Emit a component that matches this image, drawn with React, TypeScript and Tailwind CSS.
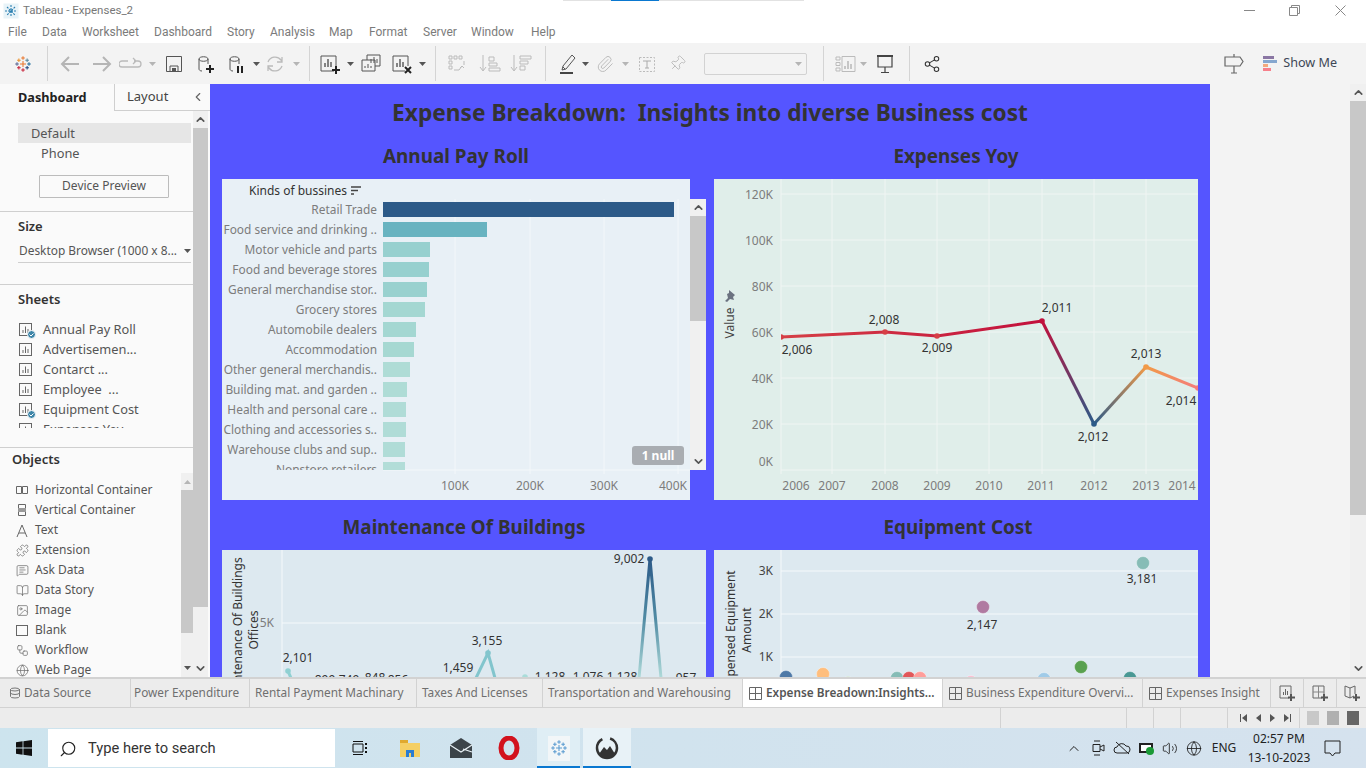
import React from 'react';
import { Search, Volume2, Globe, ChevronUp, ChevronDown, ChevronLeft, Puzzle, MessageSquareText, BookOpen, Image as ImageIcon, Workflow, Share2, Database, Pin, Paperclip } from 'lucide-react';

const menuItems = [
  { label: 'File', w: 'w-[34px]' },
  { label: 'Data', w: 'w-[40px]' },
  { label: 'Worksheet', w: 'w-[72px]' },
  { label: 'Dashboard', w: 'w-[73px]' },
  { label: 'Story', w: 'w-[43px]' },
  { label: 'Analysis', w: 'w-[59px]' },
  { label: 'Map', w: 'w-[40px]' },
  { label: 'Format', w: 'w-[54px]' },
  { label: 'Server', w: 'w-[48px]' },
  { label: 'Window', w: 'w-[60px]' },
  { label: 'Help', w: 'w-[40px]' },
];

const bars = [
  { label: 'Retail Trade', end: 674, color: '#2c5a88' },
  { label: 'Food service and drinking ..', end: 487, color: '#68b3c0' },
  { label: 'Motor vehicle and parts', end: 430, color: '#97d0cf' },
  { label: 'Food and beverage stores', end: 429, color: '#97d0cf' },
  { label: 'General merchandise stor..', end: 427, color: '#99d1cf' },
  { label: 'Grocery stores', end: 425, color: '#a4d7d2' },
  { label: 'Automobile dealers', end: 416, color: '#a4d7d2' },
  { label: 'Accommodation', end: 414, color: '#a6d8d2' },
  { label: 'Other general merchandis..', end: 410, color: '#afdcd6' },
  { label: 'Building mat. and garden ..', end: 407, color: '#afdcd6' },
  { label: 'Health and personal care ..', end: 406, color: '#b0dcd7' },
  { label: 'Clothing and accessories s..', end: 406, color: '#b0dcd7' },
  { label: 'Warehouse clubs and sup..', end: 405, color: '#b0dcd7' },
  { label: 'Nonstore retailers', end: 405, color: '#b2ddd8' },
];

const sheets = [
  { label: 'Annual Pay Roll', used: true },
  { label: 'Advertisemen...', used: false },
  { label: 'Contarct ...', used: false },
  { label: 'Employee  ...', used: false },
  { label: 'Equipment Cost', used: true },
  { label: 'Expenses Yoy', used: false },
];

const tabs = [
  { label: 'Power Expenditure', w: 'w-[119px] pl-[3px]' },
  { label: 'Rental Payment Machinary', w: 'w-[167px] pl-[5px]' },
  { label: 'Taxes And Licenses', w: 'w-[126px] pl-[5px]' },
  { label: 'Transportation and Warehousing', w: 'w-[200px] pl-[5px]' },
];

const dashTabs = [
  { label: 'Expense Breadown:Insights...', w: 'w-[200px]', active: true },
  { label: 'Business Expenditure Overvi...', w: 'w-[200px]', active: false },
  { label: 'Expenses Insight', w: 'w-[128px]', active: false },
];

const lineYears = [
  [796, '2006'], [832, '2007'], [885, '2008'], [937, '2009'], [989, '2010'],
  [1041, '2011'], [1094, '2012'], [1146, '2013'], [1182, '2014'],
] as const;

const lineLabels = [
  [797, 354, '2,006'], [884, 324, '2,008'], [937, 352, '2,009'], [1057, 312, '2,011'],
  [1093, 441, '2,012'], [1146, 358, '2,013'], [1181, 405, '2,014'],
] as const;

const scatter = [
  [786, 677, '#4e79a7'], [823, 674, '#ffbe7d'], [848, 683, '#b6d7a8'], [897, 678, '#86bcb6'],
  [909, 678, '#e15759'], [920, 678, '#ff9d9a'], [971, 682, '#fabfd2'], [1044, 679, '#a0cbe8'],
  [1081, 667, '#59a14f'], [1130, 678, '#499894'],
] as const;

function TableauMark({ size = 18, mono = false }: { size?: number; mono?: boolean }) {
  const crosses = [
    [12, 12, 4, mono ? '#5a9bd0' : '#e8762d'], [12, 4, 2.4, mono ? '#5a9bd0' : '#e8762d'], [12, 20, 2.4, mono ? '#5a9bd0' : '#c72037'],
    [4, 12, 2.4, mono ? '#5a9bd0' : '#5b6591'], [20, 12, 2.4, mono ? '#5a9bd0' : '#1f6f9f'],
    [6.5, 7, 2.4, mono ? '#5a9bd0' : '#eb912b'], [17.5, 7, 2.4, mono ? '#5a9bd0' : '#59879b'],
    [6.5, 17, 2.4, mono ? '#5a9bd0' : '#c72037'], [17.5, 17, 2.4, mono ? '#5a9bd0' : '#1f447e'],
  ] as const;
  return (
    <svg width={size} height={size} viewBox="0 0 24 24" fill="none" className="shrink-0">
      {crosses.map(([x, y, r, c], i) => (
        <path key={i} d={`M${x - r} ${y}H${x + r}M${x} ${y - r}V${y + r}`} stroke={c} strokeWidth={1.4} />
      ))}
    </svg>
  );
}

function Drop({ on = false, className = '' }: { on?: boolean; className?: string }) {
  return (
    <svg width="7" height="4" viewBox="0 0 7 4" className={`shrink-0 ${className}`}>
      <path d="M0 0H7L3.5 4Z" fill={on ? '#555' : '#b5b5b5'} />
    </svg>
  );
}

function Sep({ className }: { className: string }) {
  return <div className={`w-px h-[35px] bg-[#d4d4d4] shrink-0 ${className}`} />;
}

function Tool({ className, children }: { className: string; children: React.ReactNode }) {
  return (
    <svg width="24" height="24" viewBox="0 0 24 24" fill="none" className={`shrink-0 ${className}`}>
      {children}
    </svg>
  );
}

function SheetIcon({ used }: { used: boolean }) {
  return (
    <span className="relative w-[14px] h-[14px] shrink-0">
      <svg width="14" height="14" viewBox="0 0 14 14" fill="none">
        <rect x="0.5" y="0.5" width="12" height="12" stroke="#666" />
        <path d="M4 10V7M6.5 10V3.5M9 10V6" stroke="#666" />
      </svg>
      {used && (
        <svg width="9" height="9" viewBox="0 0 9 9" className="absolute left-[8px] top-[7px]">
          <circle cx="4.500" cy="4.500" r="4" fill="#3d85a8" stroke="#fafafa" />
          <path d="M2.500 4.500l1.500 1.500 2.500-2.500" stroke="#fff" fill="none" />
        </svg>
      )}
    </span>
  );
}

function ScrollBtn({ dir }: { dir: 'up' | 'down' }) {
  return dir === 'up'
    ? <ChevronUp size={13} strokeWidth={3} color="#555" />
    : <ChevronDown size={13} strokeWidth={3} color="#555" />;
}

function Toolbar() {
  return (
    <div className="h-[41px] bg-[#f3f3f3] flex items-center pl-[14px] pr-[29px] shrink-0">
      <TableauMark />
      <Sep className="ml-[15px]" />
      <Tool className="ml-[10px]"><path d="M21 12H4M11 5l-7 7 7 7" stroke="#b5b5b5" strokeWidth="2" /></Tool>
      <Tool className="ml-[8px]"><path d="M3 12H20M13 5l7 7-7 7" stroke="#b5b5b5" strokeWidth="2" /></Tool>
      <Tool className="ml-[5px]"><path d="M9 9H3a2 2 0 0 0 0 6h16a2 2 0 0 0 0-6h-4M14 6l3 3-3 3" stroke="#bbb" strokeWidth="1.3" /></Tool>
      <Drop className="ml-[6px]" />
      <Tool className="ml-[6px]"><path d="M4.500 4.500h15v15h-15zM8 19v-5h8v5" stroke="#555" /><rect x="10" y="16" width="4" height="3" fill="#555" /></Tool>
      <Tool className="ml-[7px]"><path d="M6 7c0-3 9-3 9 0v5M6 7v10c0 1 1 2 3 2M6 7c0 3 9 3 9 0" stroke="#555" /><path d="M17 13v8M13 17h8" stroke="#222" strokeWidth="2" /></Tool>
      <Tool className="ml-[7px]"><path d="M6 7c0-3 9-3 9 0v5M6 7v10c0 1 1 2 3 2M6 7c0 3 9 3 9 0" stroke="#555" /><path d="M14 14v7M18 14v7" stroke="#222" strokeWidth="2" /></Tool>
      <Drop on className="ml-[5px]" />
      <Tool className="ml-[3px]"><path d="M5 10a7.500 7.500 0 0 1 13-2l1 2M19 14a7.500 7.500 0 0 1-13 2l-1-2M19 5v5h-5M5 19v-5h5" stroke="#bbb" strokeWidth="1.3" /></Tool>
      <Drop className="ml-[6px]" />
      <Sep className="ml-[9px]" />
      <Tool className="ml-[8px]"><path d="M16 19H3V4h15v10" stroke="#555" /><path d="M7 15v-4M10 15V7M13 15v-5" stroke="#555" strokeWidth="1.4" /><path d="M18 14v8M14 18h8" stroke="#222" strokeWidth="2" /></Tool>
      <Drop on className="ml-[5px]" />
      <Tool className="ml-[5px]"><path d="M8 8V3h13v11h-5M3 8h13v11H3z" stroke="#555" fill="#f3f3f3" /><path d="M12 11V7M15 11V5M18 11V7M6 16v-2M9 16v-4M12 16v-2" stroke="#555" /></Tool>
      <Tool className="ml-[7px]"><path d="M15 19H3V4h15v10" stroke="#555" /><path d="M7 15v-4M10 15V7M13 15v-5" stroke="#555" strokeWidth="1.4" /><path d="M15 15l6 6M21 15l-6 6" stroke="#222" strokeWidth="2" /></Tool>
      <Drop on className="ml-[5px]" />
      <Sep className="ml-[9px]" />
      <Tool className="ml-[9px]"><path d="M4 4h3v3H4zM9 4h3v3H9zM14 4h3v3h-3zM4 9h3v3H4zM4 14h3v3H4zM9 18h5l3-4M19 9v4M15 16l2-2 2 2" stroke="#bbb" /></Tool>
      <Tool className="ml-[9px]"><path d="M5 3v15M2 15l3 4 3-4M11 5h5v4h-5zM11 11h8v3h-8zM11 16h11v3H11z" stroke="#bbb" /></Tool>
      <Tool className="ml-[7px]"><path d="M5 3v15M2 15l3 4 3-4M11 4h11v3H11zM11 9h8v3h-8zM11 14h5v4h-5z" stroke="#bbb" /></Tool>
      <Sep className="ml-[12px]" />
      <Tool className="ml-[10px]"><path d="M16 3l3 3-9 11-4 1 1-4zM7 15l2 2" stroke="#555" /><path d="M4 21h13" stroke="#444" strokeWidth="2" /></Tool>
      <Drop on className="ml-[2px]" />
      <span className="ml-[4px] w-[24px] flex justify-center shrink-0"><Paperclip size={18} color="#bbb" strokeWidth={1.3} /></span>
      <Drop className="ml-[5px]" />
      <Tool className="ml-[6px]"><rect x="4.500" y="5.500" width="15" height="14" stroke="#bbb" strokeDasharray="2 1.5" /><path d="M8 9h8M12 9v7M10 16h4" stroke="#aaa" /></Tool>
      <span className="ml-[6px] w-[24px] flex justify-center shrink-0"><Pin size={17} color="#bbb" strokeWidth={1.3} className="rotate-45" /></span>
      <div className="ml-[15px] w-[103px] h-[22px] border border-[#d2d2d2] rounded-[2px] flex items-center justify-end pr-[4px] shrink-0"><Drop /></div>
      <Sep className="ml-[16px]" />
      <Tool className="ml-[10px]"><path d="M2 5h4v3H2zM2 10.500h4v3H2zM2 16h4v3H2zM8 4.500h13v15H8z" stroke="#bbb" /><path d="M11 17v-3M14 17V9M17 17v-5" stroke="#bbb" strokeWidth="1.6" /></Tool>
      <Drop className="ml-[2px]" />
      <Tool className="ml-[6px]"><path d="M4 4h16" stroke="#444" strokeWidth="2" /><path d="M5 5v10h14V5M12 15v5M8 20.500h8" stroke="#444" strokeWidth="1.2" /></Tool>
      <Sep className="ml-[12px]" />
      <span className="ml-[10px] w-[24px] flex justify-center shrink-0"><Share2 size={18} color="#333" strokeWidth={1.4} /></span>
      <Tool className="ml-auto"><path d="M12 2v3M12 14v7M9 21h6M3 5h15l3 4.500-3 4.500H3z" stroke="#666" strokeWidth="1.2" /></Tool>
      <svg width="14" height="16" viewBox="0 0 14 16" className="ml-[17px] shrink-0">
        <rect width="11" height="3" fill="#8a76a3" />
        <rect y="4" width="14" height="3" fill="#86a7cf" />
        <rect y="8" width="5" height="3" fill="#f3a97d" />
        <rect y="12" width="8" height="3" fill="#f7808b" />
      </svg>
      <span className="ml-[6px] text-[12.6px] text-[#3d4756] whitespace-nowrap">Show Me</span>
    </div>
  );
}

function ObjectRow({ icon, label }: { icon: React.ReactNode; label: string }) {
  return (
    <div className="h-[20px] flex items-center gap-[6px]">
      <span className="w-[14px] flex justify-center shrink-0">{icon}</span>
      {label}
    </div>
  );
}

function Sidebar() {
  return (
    <div className="w-[210px] shrink-0 bg-[#fafafa] flex flex-col h-full">
      <div className="h-[27px] flex shrink-0">
        <div className="w-[114px] pl-[18px] pt-[4px] text-[12.7px] font-bold text-[#222]">Dashboard</div>
        <div className="flex-1 border-l border-b border-[#cfcfcf] flex items-center pb-[1px]">
          <span className="ml-[12px] text-[13px] text-[#444]">Layout</span>
          <ChevronLeft size={14} color="#666" className="ml-[23px]" />
        </div>
      </div>
      <div className="flex-1 flex min-h-0">
        <div className="w-[193px] flex flex-col text-[#555]">
          <div className="h-[101px] border-b border-[#cfcfcf] pt-[12px] shrink-0">
            <div className="ml-[18px] mr-[2px] h-[20px] bg-[#e6e6e6] pl-[13px] text-[12.8px] leading-[20px]">Default</div>
            <div className="pl-[41px] h-[20px] text-[12.8px] leading-[20px]">Phone</div>
            <div className="ml-[39px] mt-[12px] w-[130px] h-[23px] border border-[#bcbcbc] rounded-[1px] text-center text-[12px] leading-[20px]">Device Preview</div>
          </div>
          <div className="h-[73px] border-b border-[#cfcfcf] shrink-0 pt-[4px]">
            <div className="pl-[18px] text-[13px] font-semibold text-[#333] leading-[20px]">Size</div>
            <div className="ml-[18px] mr-[2px] mt-[3px] h-[24px] flex items-center border-b border-[#cfcfcf] text-[11.9px] whitespace-nowrap">
              <span className="pl-[1px] w-[165px]">Desktop Browser (1000 x 8...</span>
              <Drop on className="ml-[1px]" />
            </div>
          </div>
          <div className="h-[163px] border-b border-[#cfcfcf] shrink-0 pt-[4px]">
            <div className="pl-[18px] text-[13px] font-semibold text-[#333] leading-[20px]">Sheets</div>
            <div className="mt-[11px] h-[108px] overflow-hidden">
              {sheets.map((s) => (
                <div key={s.label} className="h-[20px] flex items-center pl-[19px] gap-[10px] text-[12.8px] whitespace-pre">
                  <SheetIcon used={s.used} />
                  <span>{s.label}</span>
                </div>
              ))}
            </div>
          </div>
          <div className="flex-1 min-h-0 flex flex-col">
            <div className="pl-[12px] pt-[1px] text-[13px] font-semibold text-[#333] leading-[20px] h-[25px]">Objects</div>
            <div className="flex-1 min-h-0 flex">
              <div className="flex-1 pl-[15px] pt-[7px] text-[12px] overflow-hidden">
                <ObjectRow label="Horizontal Container" icon={<svg width="12" height="8" viewBox="0 0 12 8" fill="none"><path d="M.5.5h5v7h-5zM6.500.5h5v7h-5z" stroke="#666" /></svg>} />
                <ObjectRow label="Vertical Container" icon={<svg width="8" height="12" viewBox="0 0 8 12" fill="none"><path d="M.5.5h7v4.500h-7zM.5 7h7v4.500h-7z" stroke="#666" /><rect y="4" width="8" height="4" fill="#999" /></svg>} />
                <ObjectRow label="Text" icon={<svg width="12" height="13" viewBox="0 0 12 13" fill="none"><path d="M1 13L6 1l5 12M3 9h6" stroke="#666" /></svg>} />
                <ObjectRow label="Extension" icon={<Puzzle size={13} color="#666" strokeWidth={1.3} />} />
                <ObjectRow label="Ask Data" icon={<MessageSquareText size={13} color="#666" strokeWidth={1.3} />} />
                <ObjectRow label="Data Story" icon={<BookOpen size={13} color="#666" strokeWidth={1.3} />} />
                <ObjectRow label="Image" icon={<ImageIcon size={13} color="#666" strokeWidth={1.3} />} />
                <ObjectRow label="Blank" icon={<span className="block w-[12px] h-[11px] border border-[#666]" />} />
                <ObjectRow label="Workflow" icon={<Workflow size={13} color="#666" strokeWidth={1.3} />} />
                <ObjectRow label="Web Page" icon={<Globe size={13} color="#666" strokeWidth={1.3} />} />
              </div>
              <div className="w-[12px] bg-[#f0f0f0] flex flex-col items-center relative shrink-0">
                <div className="h-[17px] flex items-center"><Drop className="rotate-180" /></div>
                <div className="w-full h-[143px] bg-[#c8c8c8]" />
                <div className="mt-auto h-[18px] flex items-center"><Drop on /></div>
              </div>
            </div>
          </div>
        </div>
        <div className="w-[15px] bg-[#f0f0f0] flex flex-col items-center shrink-0">
          <div className="h-[17px] flex items-center"><ScrollBtn dir="up" /></div>
          <div className="w-full h-[479px] bg-[#c8c8c8]" />
          <div className="mt-auto h-[18px] flex items-center"><ScrollBtn dir="down" /></div>
        </div>
      </div>
    </div>
  );
}

function BarChart() {
  return (
    <svg width="468" height="321" viewBox="222 179 468 321" className="block w-[468px] h-[321px] bg-[#e8f0f6] shrink-0">
      <text x="249" y="195" fontSize="12" fill="#333">Kinds of bussines</text>
      <path d="M351 187h10M351 190.500h7M351 194h3" stroke="#444" strokeWidth="1.5" />
      {[455, 530, 604, 678].map((x) => (
        <line key={x} x1={x} x2={x} y1="199" y2="474" stroke="#f3f7fa" />
      ))}
      <line x1="383" x2="690" y1="470" y2="470" stroke="#f4f8fa" />
      <defs>
        <clipPath id="barClip"><rect x="222" y="199" width="468" height="271" /></clipPath>
      </defs>
      <g clipPath="url(#barClip)">
        {bars.map((b, i) => (
          <g key={b.label}>
            <text x="377" y={214 + i * 20} textAnchor="end" fontSize="11.9" fill="#7c7c7c">{b.label}</text>
            <rect x="383" y={202 + i * 20} width={b.end - 383} height="15" fill={b.color} />
          </g>
        ))}
      </g>
      {[[455, '100K'], [530, '200K'], [604, '300K'], [673, '400K']].map(([x, t]) => (
        <text key={t} x={x} y="490" textAnchor="middle" fontSize="12" fill="#7c7c7c">{t}</text>
      ))}
    </svg>
  );
}

function LineChart() {
  const pts = [[781, 337], [885, 332], [937, 336], [1042, 321], [1094, 424], [1146, 367], [1198, 388]];
  return (
    <svg width="484" height="321" viewBox="714 179 484 321" className="block w-[484px] h-[321px] bg-[#e0eeea]">
      <defs>
        <linearGradient id="seg1" gradientUnits="userSpaceOnUse" x1="1042" y1="321" x2="1094" y2="424">
          <stop offset="0" stopColor="#c2103c" /><stop offset="1" stopColor="#2c5a88" />
        </linearGradient>
        <linearGradient id="seg2" gradientUnits="userSpaceOnUse" x1="1094" y1="424" x2="1146" y2="367">
          <stop offset="0" stopColor="#2c5a88" /><stop offset="1" stopColor="#f19a48" />
        </linearGradient>
        <linearGradient id="seg3" gradientUnits="userSpaceOnUse" x1="1146" y1="367" x2="1198" y2="388">
          <stop offset="0" stopColor="#f19a48" /><stop offset="1" stopColor="#f47c7c" />
        </linearGradient>
        <linearGradient id="seg0" gradientUnits="userSpaceOnUse" x1="781" y1="337" x2="1042" y2="321">
          <stop offset="0" stopColor="#d63f46" /><stop offset="1" stopColor="#c2103c" />
        </linearGradient>
        <clipPath id="plotClip"><rect x="781" y="179" width="417" height="295" /></clipPath>
      </defs>
      {[194, 240, 286, 332, 378, 424, 470].map((y) => (
        <line key={y} x1="781" x2="1198" y1={y} y2={y} stroke="#f0f5f3" />
      ))}
      {[781, 832, 885, 937, 989, 1042, 1094, 1146].map((x) => (
        <line key={x} x1={x} x2={x} y1="179" y2="474" stroke="#f0f5f3" />
      ))}
      {[[199, '120K'], [245, '100K'], [291, '80K'], [337, '60K'], [383, '40K'], [429, '20K'], [466, '0K']].map(([y, t]) => (
        <text key={t} x="773" y={y} textAnchor="end" fontSize="12" fill="#7c7c7c">{t}</text>
      ))}
      <text transform="translate(734 323) rotate(-90)" textAnchor="middle" fontSize="12" fill="#444">Value</text>
      <path d="M729 290l6 5-2 2 1 3-4-1-3 3-2-1 3-3-1-4 2-1z" fill="#6b7280" />
      <g clipPath="url(#plotClip)">
        <polyline points="781,337 885,332 937,336 1042,321" fill="none" stroke="url(#seg0)" strokeWidth="3" />
        <line x1="1042" y1="321" x2="1094" y2="424" stroke="url(#seg1)" strokeWidth="3" />
        <line x1="1094" y1="424" x2="1146" y2="367" stroke="url(#seg2)" strokeWidth="3" />
        <line x1="1146" y1="367" x2="1198" y2="388" stroke="url(#seg3)" strokeWidth="3" />
        {pts.map(([x, y], i) => (
          <circle key={x} cx={x} cy={y} r="2.8" fill={['#d63f46', '#d63f46', '#d63f46', '#c2103c', '#2c5a88', '#f19a48', '#f47c7c'][i]} />
        ))}
      </g>
      {lineLabels.map(([x, y, t]) => (
        <text key={t} x={x} y={y} textAnchor="middle" fontSize="12" fill="#333">{t}</text>
      ))}
      {lineYears.map(([x, t]) => (
        <text key={t} x={x} y="490" textAnchor="middle" fontSize="12" fill="#7c7c7c">{t}</text>
      ))}
    </svg>
  );
}

function MaintenanceChart() {
  const labels = [[298, 662, '2,101'], [325, 684, '899'], [349, 684, '749'], [375, 682, '848'], [398, 684, '856'], [458, 672, '1,459'], [487, 645, '3,155'], [550, 681, '1,128'], [588, 681, '1,076'], [622, 681, '1,128'], [629, 563, '9,002'], [686, 682, '957']] as const;
  return (
    <svg width="484" height="127" viewBox="222 550 484 127" className="block w-[484px] h-[127px] bg-[#dde9f0]">
      <defs>
        <linearGradient id="peak" gradientUnits="userSpaceOnUse" x1="0" y1="559" x2="0" y2="677">
          <stop offset="0" stopColor="#2c5a88" /><stop offset="0.5" stopColor="#4f8aa3" /><stop offset="1" stopColor="#aed9d8" />
        </linearGradient>
      </defs>
      <line x1="282" x2="282" y1="550" y2="677" stroke="#f5f9fb" />
      <line x1="282" x2="706" y1="623" y2="623" stroke="#f5f9fb" />
      <text x="274" y="627" textAnchor="end" fontSize="12" fill="#7c7c7c">5K</text>
      <text transform="translate(242 630) rotate(-90)" textAnchor="middle" fontSize="12" fill="#333">Maintenance Of Buildings</text>
      <text transform="translate(258 630) rotate(-90)" textAnchor="middle" fontSize="12" fill="#333">Offices</text>
      <path d="M288 671L296 690" stroke="#8fd0d2" strokeWidth="3" fill="none" />
      <circle cx="288" cy="671" r="2.8" fill="#8fd0d2" />
      <path d="M476 678L488 653L495 678" stroke="#82c5cd" strokeWidth="3" fill="none" />
      <circle cx="488" cy="653" r="2.8" fill="#82c5cd" />
      <circle cx="525" cy="677" r="2.8" fill="#a9dcd9" />
      <path d="M639 678L650 559L661 678" stroke="url(#peak)" strokeWidth="3" fill="none" />
      <circle cx="650" cy="559" r="2.8" fill="#2c5a88" />
      {labels.map(([x, y, t], i) => (
        <text key={i} x={x} y={y} textAnchor="middle" fontSize="12" fill="#333">{t}</text>
      ))}
    </svg>
  );
}

function ScatterChart() {
  return (
    <svg width="484" height="127" viewBox="714 550 484 127" className="block w-[484px] h-[127px] bg-[#dde9f0]">
      <line x1="781" x2="781" y1="550" y2="677" stroke="#f5f9fb" />
      {[[571, '3K'], [614, '2K'], [657, '1K']].map(([y, t]) => (
        <g key={t}>
          <line x1="781" x2="1198" y1={y} y2={y} stroke="#f5f9fb" />
          <text x="773" y={Number(y) + 4} textAnchor="end" fontSize="12" fill="#444">{t}</text>
        </g>
      ))}
      <text transform="translate(735 630) rotate(-90)" textAnchor="middle" fontSize="12" fill="#333">Expensed Equipment</text>
      <text transform="translate(751 630) rotate(-90)" textAnchor="middle" fontSize="12" fill="#333">Amount</text>
      {scatter.map(([x, y, c]) => (
        <circle key={x} cx={x} cy={y} r="6.5" fill={c} stroke="#ffffff" strokeOpacity="0.35" />
      ))}
      <circle cx="1143" cy="563" r="6.5" fill="#86bcb6" stroke="#ffffff" strokeOpacity="0.35" />
      <circle cx="983" cy="607" r="6.5" fill="#b07aa1" stroke="#ffffff" strokeOpacity="0.35" />
      <text x="1142" y="583" textAnchor="middle" fontSize="12" fill="#333">3,181</text>
      <text x="982" y="629" textAnchor="middle" fontSize="12" fill="#333">2,147</text>
    </svg>
  );
}

function Dashboard() {
  const heading = 'text-[18.9px] font-bold text-[#333] text-center';
  return (
    <div className="w-[1000px] shrink-0 bg-[#5555ff] h-full overflow-hidden px-[12px]">
      <div className="h-[58px] flex items-center justify-center text-[22.7px] font-bold text-[#333] whitespace-pre">
        Expense Breakdown:  Insights into diverse Business cost
      </div>
      <div className="flex gap-[8px]">
        <div className="w-[484px]">
          <div className={`w-[468px] h-[37px] pb-[8px] flex items-center justify-center ${heading}`}>Annual Pay Roll</div>
          <div className="relative flex">
            <BarChart />
            <div className="mt-[20px] mb-[30px] w-[16px] bg-[#f0f0f0] flex flex-col items-center">
              <div className="h-[17px] flex items-center"><ScrollBtn dir="up" /></div>
              <div className="w-full h-[105px] bg-[#c8c8c8]" />
              <div className="mt-auto h-[18px] flex items-center"><ScrollBtn dir="down" /></div>
            </div>
            <div className="absolute left-[410px] top-[267px] w-[52px] h-[19px] rounded-[3px] bg-[#a9adb2] text-white text-[12px] font-bold text-center leading-[19px]">1 null</div>
          </div>
          <div className={`h-[50px] pt-[4px] flex items-center justify-center ${heading}`}>Maintenance Of Buildings</div>
          <MaintenanceChart />
        </div>
        <div className="w-[484px]">
          <div className={`h-[37px] pb-[8px] flex items-center justify-center ${heading}`}>Expenses Yoy</div>
          <LineChart />
          <div className={`h-[50px] pt-[4px] pl-[4px] flex items-center justify-center ${heading}`}>Equipment Cost</div>
          <ScatterChart />
        </div>
      </div>
    </div>
  );
}

function Tabs() {
  return (
    <div className="h-[31px] bg-[#ececec] border-t-2 border-b border-[#d2d2d2] flex shrink-0 text-[11.8px] text-[#6f6f6f]">
      <div className="w-[131px] flex items-center pl-[9px] gap-[3px] border-r border-[#d2d2d2]">
        <Database size={12} color="#777" className="shrink-0" />
        Data Source
      </div>
      {tabs.map((t) => (
        <div key={t.label} className={`${t.w} flex items-center border-r border-[#d2d2d2] whitespace-nowrap`}>{t.label}</div>
      ))}
      {dashTabs.map((t) => (
        <div key={t.label} className={`${t.w} flex items-center pl-[6px] gap-[4px] border-r border-[#d2d2d2] whitespace-nowrap ${t.active ? 'bg-white font-semibold text-[#555]' : ''}`}>
          <svg width="13" height="13" viewBox="0 0 13 13" fill="none" className="shrink-0"><path d="M.5.5h12v12H.5zM6.500.5v12M.5 6.500h12" stroke="#666" /></svg>
          {t.label}
        </div>
      ))}
      <div className="w-[33px] flex items-center justify-center border-r border-[#d2d2d2]">
        <svg width="18" height="18" viewBox="0 0 18 18" fill="none"><path d="M11 14H2V2h11v8" stroke="#666" /><path d="M5.500 11V8M7.500 11V5M9.500 11V7" stroke="#666" /><path d="M13 10v7M10 13.500h7" stroke="#555" strokeWidth="2" /></svg>
      </div>
      <div className="w-[33px] flex items-center justify-center border-r border-[#d2d2d2]">
        <svg width="18" height="18" viewBox="0 0 18 18" fill="none"><path d="M11 14H2V2h11v8" stroke="#666" /><path d="M7.500 2v12M2 8h11" stroke="#888" /><path d="M13 10v7M10 13.500h7" stroke="#555" strokeWidth="2" /></svg>
      </div>
      <div className="w-[28px] flex items-center justify-center pl-[2px]">
        <svg width="18" height="18" viewBox="0 0 18 18" fill="none"><path d="M2 2l5 2 5-2v8M7 4v10M11 12l-4 2-5-2V2" stroke="#666" /><path d="M13 10v7M10 13.500h7" stroke="#555" strokeWidth="2" /></svg>
      </div>
    </div>
  );
}

function StatusBar() {
  const cell = 'h-full border-l border-[#d2d2d2]';
  return (
    <div className="h-[20px] bg-[#ececec] flex items-center justify-end shrink-0">
      <div className={`${cell} w-[126px]`} />
      <div className={`${cell} w-[27px]`} />
      <div className={`${cell} w-[27px]`} />
      <div className={`${cell} w-[47px]`} />
      <div className={`${cell} w-[72px] flex items-center justify-end gap-[9px] pr-[8px]`}>
        <svg width="7" height="8" viewBox="0 0 7 8"><path d="M0 0h1v8H0zM7 0v8L2 4z" fill="#555" /></svg>
        <svg width="5" height="8" viewBox="0 0 5 8"><path d="M5 0v8L0 4z" fill="#555" /></svg>
        <svg width="5" height="8" viewBox="0 0 5 8"><path d="M0 0v8l5-4z" fill="#555" /></svg>
        <svg width="7" height="8" viewBox="0 0 7 8"><path d="M6 0h1v8H6zM0 0v8l5-4z" fill="#555" /></svg>
      </div>
      <div className={`${cell} w-[67px] flex items-center gap-[8px] pl-[7px]`}>
        <span className="w-[12px] h-[14px] bg-[#c8c8c8]" />
        <span className="w-[12px] h-[14px] bg-[#b0b0b0]" />
        <span className="w-[12px] h-[14px] bg-[#666]" />
      </div>
    </div>
  );
}

function Taskbar() {
  return (
    <div className="h-[40px] bg-gradient-to-r from-[#cde4ee] to-[#d5e2ee] flex items-center shrink-0 text-[#222]">
      <div className="w-[48px] flex justify-center shrink-0">
        <svg width="16" height="16" viewBox="0 0 16 16" fill="#111"><path d="M0 2.200L6.600 1.300V7.500H0zM7.400 1.200L16 0V7.500H7.400zM0 8.400H6.600V14.700L0 13.800zM7.400 8.400H16V16L7.400 14.800z" /></svg>
      </div>
      <div className="w-[287px] h-[38px] bg-white flex items-center pl-[11px] gap-[11px] pt-[1px] shrink-0 text-[14.7px] text-[#333]">
        <Search size={18} color="#222" className="-scale-x-100" strokeWidth={1.5} />
        <span className="font-['Roboto',sans-serif]">Type here to search</span>
      </div>
      <div className="ml-[15px] w-[20px] flex justify-center shrink-0">
        <svg width="16" height="16" viewBox="0 0 16 16" fill="none" stroke="#111"><path d="M1 4h10v8H1zM1 1.500h10M1 14.500h10" /><path d="M14 3v2M14 7v2M14 11v2" strokeWidth="2" /></svg>
      </div>
      <div className="ml-[30px] w-[20px] flex justify-center shrink-0">
        <svg width="22" height="20" viewBox="0 0 22 20" className="shrink-0"><path d="M1 2h8v3H1z" fill="#e0a92e" /><path d="M1 5h20v14H1z" fill="#f5cf64" /><path d="M7 12h8v7H7z" fill="#2b7cd3" /><path d="M10 15h2v4h-2z" fill="#f5cf64" /></svg>
      </div>
      <div className="ml-[31px] w-[20px] flex justify-center shrink-0">
        <svg width="24" height="20" viewBox="0 0 24 20" className="shrink-0"><path d="M1 7L12 0l11 7v13H1z" fill="#3c4449" /><path d="M1 7l11 7 11-7M23 14l-9-3" stroke="#e8f0f4" strokeWidth="1.2" fill="none" /></svg>
      </div>
      <div className="ml-[28px] w-[20px] flex justify-center shrink-0">
        <svg width="22" height="24" viewBox="0 0 22 24" fill="none" className="shrink-0"><ellipse cx="11" cy="12" rx="8" ry="10" stroke="#d2121d" strokeWidth="5" /></svg>
      </div>
      <div className="ml-[18px] w-[43px] h-[40px] flex flex-col items-center justify-center shrink-0 relative bg-[#dfeef5]">
        <span className="w-[22px] h-[25px] bg-[#f2f6f8] flex items-center justify-center"><TableauMark size={18} mono /></span>
        <span className="absolute bottom-0 inset-x-0 h-[2px] bg-[#0a78d0]" />
      </div>
      <div className="ml-[3px] w-[48px] h-[40px] flex items-center justify-center relative bg-[#e8f2f7] shrink-0">
        <svg width="24" height="24" viewBox="0 0 24 24" fill="none"><circle cx="12" cy="12" r="10" stroke="#333" strokeWidth="2.5" strokeDasharray="42 8" /><path d="M4 18l5-7 3 3 3-4 5 8a10 10 0 0 1-16 0z" fill="#333" /></svg>
        <span className="absolute bottom-0 inset-x-0 h-[2px] bg-[#0a78d0]" />
      </div>
      <div className="ml-[435px] w-[16px] flex justify-center shrink-0"><ChevronUp size={17} color="#222" strokeWidth={1.5} /></div>
      <div className="ml-[8px] w-[16px] flex justify-center shrink-0">
        <svg width="14" height="18" viewBox="0 0 14 18" fill="none" stroke="#222"><path d="M3 2h6M3 16h6M2 5.500h7v7H2zM9 8l4-2v6l-4-2" /></svg>
      </div>
      <div className="ml-[8px] w-[16px] flex justify-center shrink-0">
        <svg width="18" height="16" viewBox="0 0 18 16" fill="none" stroke="#222" className="shrink-0"><path d="M4 13a3 3 0 0 1 0-6 5 5 0 0 1 9-1 3.500 3.500 0 0 1 1 7zM3 2l13 12" /></svg>
      </div>
      <div className="ml-[8px] w-[16px] flex justify-center shrink-0 relative">
        <span className="w-[14px] h-[10px] border-2 border-[#222] bg-[#fff]" />
        <span className="absolute left-[8px] top-[4px] w-[8px] h-[8px] rounded-full bg-[#1a9a36]" />
      </div>
      <div className="ml-[8px] w-[16px] flex justify-center shrink-0"><Volume2 size={17} color="#222" strokeWidth={1.3} /></div>
      <div className="ml-[8px] w-[16px] flex justify-center shrink-0"><Globe size={17} color="#222" strokeWidth={1.3} /></div>
      <div className="ml-[7px] w-[30px] text-center text-[12px] shrink-0">ENG</div>
      <div className="ml-[2px] w-[76px] text-center text-[12px] leading-[19px] shrink-0">
        <div>02:57 PM</div>
        <div>13-10-2023</div>
      </div>
      <div className="ml-[3px] w-[24px] flex justify-center shrink-0">
        <svg width="17" height="17" viewBox="0 0 17 17" fill="none" stroke="#222"><path d="M1 1h15v12h-5l-2.500 3L6 13H1z" /></svg>
      </div>
    </div>
  );
}

export default function App() {
  return (
    <div className="w-[1366px] h-[768px] overflow-hidden flex flex-col bg-white font-['Noto_Sans','Open_Sans',sans-serif] relative">
      <div className="absolute left-[563px] top-0 w-[241px] h-px bg-[#e2e2e2]" />
      <div className="absolute left-[611px] top-0 w-[48px] h-px bg-[#0a78d0]" />
      <div className="h-[21px] flex items-center pl-[3px] shrink-0">
        <svg width="16" height="16" viewBox="0 0 16 16" className="shrink-0" fill="none">
          <rect x="0.5" y="0.5" width="15" height="15" fill="#e8f3f8" />
          <path d="M8 2v12M2 8h12M4 4l8 8M12 4l-8 8" stroke="#2b7fb0" strokeWidth="1.1" strokeDasharray="2 1" />
        </svg>
        <span className="ml-[4px] text-[11.5px] text-[#777] font-['Roboto',sans-serif]">Tableau - Expenses_2</span>
        <svg width="11" height="1" viewBox="0 0 11 1" className="ml-auto"><path d="M0 .5h11" stroke="#888" /></svg>
        <svg width="11" height="11" viewBox="0 0 11 11" className="ml-[34px]" fill="none"><path d="M.5 2.500h8v8h-8zM2.500 2.500v-2h8v8h-2" stroke="#888" /></svg>
        <svg width="11" height="11" viewBox="0 0 11 11" className="ml-[35px] mr-[20px]" fill="none"><path d="M.5.5l10 10M10.500.5l-10 10" stroke="#888" /></svg>
      </div>
      <div className="h-[22px] flex items-center pl-[8px] shrink-0 text-[12px] text-[#7b7b7b] font-['Roboto',sans-serif]">
        {menuItems.map((m) => (
          <span key={m.label} className={m.w}>{m.label}</span>
        ))}
      </div>
      <Toolbar />
      <div className="h-[593px] flex shrink-0 min-h-0">
        <Sidebar />
        <Dashboard />
        <div className="flex-1 bg-[#f3f3f3] flex justify-end">
          <div className="w-[16px] bg-[#f0f0f0] flex flex-col items-center">
            <div className="h-[17px] flex items-center"><ScrollBtn dir="up" /></div>
            <div className="w-full h-[414px] bg-[#c8c8c8]" />
            <div className="mt-auto h-[18px] flex items-center"><ScrollBtn dir="down" /></div>
          </div>
        </div>
      </div>
      <Tabs />
      <StatusBar />
      <Taskbar />
    </div>
  );
}
